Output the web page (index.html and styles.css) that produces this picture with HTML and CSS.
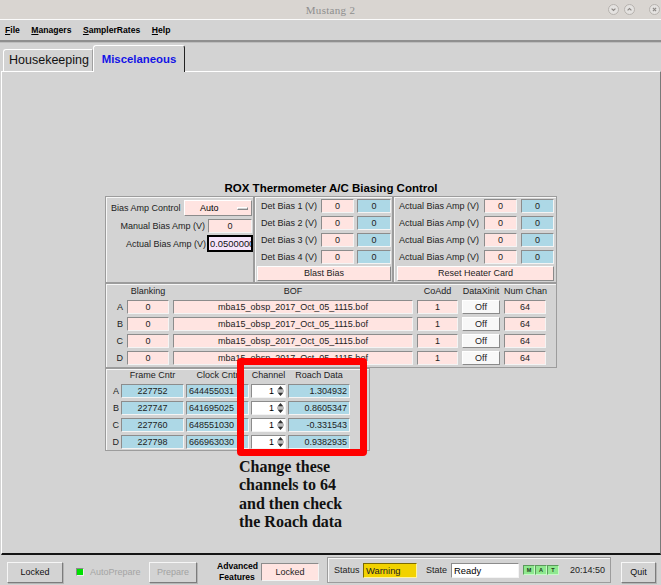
FILE: index.html
```html
<!DOCTYPE html>
<html>
<head>
<meta charset="utf-8">
<link rel="stylesheet" href="styles.css">
</head>
<body>
<div class="titlebar">
  <div></div>
  <div class="title">Mustang 2</div>
  <div class="wbtns">
    <svg class="wb" width="11" height="11" viewBox="0 0 11 11"><circle cx="5.5" cy="5.5" r="5" fill="#e4e2e0" stroke="#b6b2ae"/><path d="M3.6 4.6 L5.5 6.5 L7.4 4.6" fill="none" stroke="#8a8683" stroke-width="1.1"/></svg>
    <svg class="wb" width="11" height="11" viewBox="0 0 11 11"><circle cx="5.5" cy="5.5" r="5" fill="#e4e2e0" stroke="#b6b2ae"/><path d="M3.6 6.4 L5.5 4.5 L7.4 6.4" fill="none" stroke="#8a8683" stroke-width="1.1"/></svg>
    <svg class="wb wb-close" width="11" height="11" viewBox="0 0 11 11"><circle cx="5.5" cy="5.5" r="5" fill="#e4e2e0" stroke="#b6b2ae"/><path d="M3.9 3.9 L7.1 7.1 M7.1 3.9 L3.9 7.1" fill="none" stroke="#8a8683" stroke-width="1.1"/></svg>
  </div>
</div>
<div class="menubar">
  <span><u>F</u>ile</span>
  <span><u>M</u>anagers</span>
  <span><u>S</u>amplerRates</span>
  <span><u>H</u>elp</span>
</div>
<div class="tabs">
  <div class="tab">Housekeeping</div>
  <div class="tab sel">Miscelaneous</div>
</div>
<div class="content">
  <div class="rox">
    <div class="rox-title">ROX Thermometer A/C Biasing Control</div>
    <div class="top">
      <div class="panel p-left">
        <div class="lrow r1">
          <span class="lbl">Bias Amp Control</span>
          <span class="dropdown">Auto<span class="ind"></span></span>
        </div>
        <div class="lrow r2">
          <span class="lbl">Manual Bias Amp (V)</span>
          <span class="fld pink f-man">0</span>
        </div>
        <div class="lrow r3">
          <span class="lbl">Actual Bias Amp (V)</span>
          <span class="fld f-act">0.0500000</span>
        </div>
      </div>
      <div class="panel p-mid">
        <div class="brow"><span class="lbl">Det Bias 1 (V)</span><span class="fld pink w33">0</span><span class="fld blue w34">0</span></div>
        <div class="brow"><span class="lbl">Det Bias 2 (V)</span><span class="fld pink w33">0</span><span class="fld blue w34">0</span></div>
        <div class="brow"><span class="lbl">Det Bias 3 (V)</span><span class="fld pink w33">0</span><span class="fld blue w34">0</span></div>
        <div class="brow"><span class="lbl">Det Bias 4 (V)</span><span class="fld pink w33">0</span><span class="fld blue w34">0</span></div>
        <div class="pbtn b-blast">Blast Bias</div>
      </div>
      <div class="panel p-right">
        <div class="brow"><span class="lbl">Actual Bias Amp (V)</span><span class="fld pink w33">0</span><span class="fld blue w33">0</span></div>
        <div class="brow"><span class="lbl">Actual Bias Amp (V)</span><span class="fld pink w33">0</span><span class="fld blue w33">0</span></div>
        <div class="brow"><span class="lbl">Actual Bias Amp (V)</span><span class="fld pink w33">0</span><span class="fld blue w33">0</span></div>
        <div class="brow"><span class="lbl">Actual Bias Amp (V)</span><span class="fld pink w33">0</span><span class="fld blue w33">0</span></div>
        <div class="pbtn b-reset">Reset Heater Card</div>
      </div>
    </div>
    <div class="panel bof">
      <span></span><span class="hd">Blanking</span><span class="hd">BOF</span><span class="hd">CoAdd</span><span class="hd">DataXinit</span><span class="hd">Num Chan</span>
      <span class="let">A</span><span class="fld pink">0</span><span class="fld pink">mba15_obsp_2017_Oct_05_1115.bof</span><span class="fld pink">1</span><span class="offbtn">Off</span><span class="fld pink">64</span>
      <span class="let">B</span><span class="fld pink">0</span><span class="fld pink">mba15_obsp_2017_Oct_05_1115.bof</span><span class="fld pink">1</span><span class="offbtn">Off</span><span class="fld pink">64</span>
      <span class="let">C</span><span class="fld pink">0</span><span class="fld pink">mba15_obsp_2017_Oct_05_1115.bof</span><span class="fld pink">1</span><span class="offbtn">Off</span><span class="fld pink">64</span>
      <span class="let">D</span><span class="fld pink">0</span><span class="fld pink">mba15_obsp_2017_Oct_05_1115.bof</span><span class="fld pink">1</span><span class="offbtn">Off</span><span class="fld pink">64</span>
    </div>
    <div class="panel cnt">
      <span></span><span class="hd">Frame Cntr</span><span class="hd">Clock Cntr</span><span class="hd">Channel</span><span class="hd">Roach Data</span>
      <span class="let">A</span><span class="fld blue">227752</span><span class="fld blue clk">644455031</span><span class="spin"><span class="sv">1</span><svg class="arr" width="7" height="12" viewBox="0 0 7 12"><path d="M3.5 1 L6.5 4.5 L0.5 4.5 Z M0.5 7.5 L6.5 7.5 L3.5 11 Z" fill="#333"/><path d="M0 6 H7" stroke="#555" stroke-width="0.8"/></svg></span><span class="fld blue rd">1.304932</span>
      <span class="let">B</span><span class="fld blue">227747</span><span class="fld blue clk">641695025</span><span class="spin"><span class="sv">1</span><svg class="arr" width="7" height="12" viewBox="0 0 7 12"><path d="M3.5 1 L6.5 4.5 L0.5 4.5 Z M0.5 7.5 L6.5 7.5 L3.5 11 Z" fill="#333"/><path d="M0 6 H7" stroke="#555" stroke-width="0.8"/></svg></span><span class="fld blue rd">0.8605347</span>
      <span class="let">C</span><span class="fld blue">227760</span><span class="fld blue clk">648551030</span><span class="spin"><span class="sv">1</span><svg class="arr" width="7" height="12" viewBox="0 0 7 12"><path d="M3.5 1 L6.5 4.5 L0.5 4.5 Z M0.5 7.5 L6.5 7.5 L3.5 11 Z" fill="#333"/><path d="M0 6 H7" stroke="#555" stroke-width="0.8"/></svg></span><span class="fld blue rd">-0.331543</span>
      <span class="let">D</span><span class="fld blue">227798</span><span class="fld blue clk">666963030</span><span class="spin"><span class="sv">1</span><svg class="arr" width="7" height="12" viewBox="0 0 7 12"><path d="M3.5 1 L6.5 4.5 L0.5 4.5 Z M0.5 7.5 L6.5 7.5 L3.5 11 Z" fill="#333"/><path d="M0 6 H7" stroke="#555" stroke-width="0.8"/></svg></span><span class="fld blue rd">0.9382935</span>
    </div>
  </div>
  <div class="redbox"></div>
  <div class="note">Change these<br>channels to 64<br>and then check<br>the Roach data</div>
</div>
<div class="statusbar">
  <div class="sbtn s-locked">Locked</div>
  <span class="chk"><span></span></span>
  <span class="auto">AutoPrepare</span>
  <div class="sbtn s-prep">Prepare</div>
  <div class="adv">Advanced<br>Features</div>
  <div class="lockfld">Locked</div>
  <div class="spanel">
    <span class="sl s-status">Status</span>
    <span class="warn">Warning</span>
    <span class="sl s-state">State</span>
    <span class="ready">Ready</span>
    <span class="mat"><span>M</span><span>A</span><span>T</span></span>
    <span class="time">20:14:50</span>
  </div>
  <div class="sbtn s-quit">Quit</div>
</div>
</body>
</html>
```
FILE: styles.css
```css
html, body { margin: 0; padding: 0; }
body {
  width: 661px;
  height: 585px;
  overflow: hidden;
  background: #d3d3d3;
  font-family: "Liberation Sans", Arial, sans-serif;
  font-size: 9px;
  color: #000;
}

/* title bar */
.titlebar {
  height: 19px;
  border-bottom: 1px solid #fbfbfb;
  background: #d9d5d1;
  display: grid;
  grid-template-columns: 1fr auto 1fr;
  align-items: center;
}
.title {
  font-family: "Liberation Serif", "Times New Roman", serif;
  font-size: 11px;
  color: #8e8e8e;
  letter-spacing: 0.3px;
}
.wbtns { justify-self: end; display: flex; align-items: center; padding-right: 1px; }
.wb { display: block; margin-left: 5px; }
.wb-close { margin-left: 14px; }

/* menu bar */
.menubar {
  height: 20px;
  display: flex;
  align-items: center;
  gap: 11.5px;
  padding-left: 5px;
  font-weight: bold;
  font-size: 8.6px;
  border-bottom: 2px solid #8f8f8f;
  box-shadow: 0 1px 0 #bdbdbd;
}

/* tabs */
.tabs {
  height: 29px;
  display: flex;
  align-items: flex-end;
  padding-left: 3px;
}
.tab {
  box-sizing: border-box;
  width: 90px;
  height: 22px;
  border-top: 1px solid #fff;
  border-left: 1px solid #fff;
  border-right: 1px solid #a0a0a0;
  border-top-left-radius: 3px;
  font-size: 12.5px;
  line-height: 21px;
  padding-left: 5px;
  color: #111;
}
.tab.sel {
  width: 92px;
  height: 27px;
  border-right: 1px solid #222;
  border-top-right-radius: 3px;
  color: #1414e6;
  font-weight: bold;
  font-size: 11.4px;
  line-height: 26px;
  padding-left: 0;
  text-align: center;
  background: #d3d3d3;
  margin-bottom: -1px;
  position: relative;
  z-index: 1;
}

/* content */
.content {
  box-sizing: border-box;
  width: 660px;
  height: 484px;
  margin-left: 1px;
  border-top: 1px solid #fff;
  border-left: 1px solid #fff;
  border-right: 1px solid #7a7a7a;
  border-bottom: 2px solid #141414;
  padding-top: 109px;
  position: relative;
}
.rox { width: 452px; margin-left: 103px; }
.rox-title {
  text-align: center;
  font-weight: bold;
  font-size: 11.5px;
  line-height: 15px;
  height: 15px;
}
.panel {
  box-sizing: border-box;
  border: 1px solid #9c9c9c;
  box-shadow: inset 1px 1px 0 #f6f6f6;
}
.top { display: flex; height: 87px; }

.fld {
  box-sizing: border-box;
  display: block;
  height: 14px;
  line-height: 12px;
  border: 1px solid;
  border-color: #8c8c8c #f4f4f4 #f4f4f4 #8c8c8c;
  text-align: center;
  white-space: nowrap;
  overflow: hidden;
  color: #222;
}
.pink { background: #ffe4e1; }
.blue { background: #add8e6; }
.w33 { width: 33px; }
.w34 { width: 34px; }

.lbl { white-space: nowrap; color: #222; }

/* left subpanel */
.p-left { width: 149px; padding: 3px 0 0 5px; }
.lrow { display: flex; align-items: center; }
.r1 { height: 16px; justify-content: space-between; }
.r2 { height: 14px; margin-top: 3px; justify-content: flex-end; }
.r3 { height: 17px; margin-top: 2px; justify-content: flex-end; }
.dropdown {
  box-sizing: border-box;
  width: 68px;
  height: 16px;
  margin-right: 1px;
  background: #ffe4e1;
  border: 1px solid;
  border-color: #fff #8c8c8c #8c8c8c #fff;
  display: flex;
  align-items: center;
  padding-left: 15px;
  font-size: 9px;
}
.ind {
  box-sizing: border-box;
  width: 11px;
  height: 3px;
  margin-left: auto;
  margin-right: 3px;
  background: #d3d3d3;
  border: 1px solid;
  border-color: #fff #888 #888 #fff;
}
.f-man { width: 44px; margin-left: 3px; margin-right: 1px; }
.f-act {
  width: 46px;
  height: 17px;
  line-height: 13px;
  margin-left: 1px;
  border: 2px solid #000;
  background: #f6e4fa;
  text-align: left;
  padding-left: 1px;
  font-size: 9.4px;
  color: #111;
}

/* mid and right subpanels */
.p-mid { width: 139px; padding: 2px 1px 0 6px; }
.p-right { width: 164px; padding: 2px 2px 0 5px; }
.brow { display: flex; align-items: center; height: 14px; margin-bottom: 3px; }
.brow .lbl { flex: 1; }
.p-mid .brow .fld + .fld { margin-left: 3px; }
.p-right .brow .fld + .fld { margin-left: 4px; }
.brow:nth-child(4) { margin-bottom: 2px; }
.pbtn {
  box-sizing: border-box;
  height: 15px;
  line-height: 13px;
  text-align: center;
  background: #ffe4e1;
  border: 1px solid;
  border-color: #fdfdfd #8a8a8a #8a8a8a #fdfdfd;
  color: #222;
}
.b-blast { width: 134px; margin-left: -4px; }
.b-reset { width: 157px; margin-left: -2px; }

/* BOF */
.bof {
  height: 85px;
  display: grid;
  grid-template-columns: 17px 42px 240px 41px 38px 42px;
  grid-template-rows: 11px repeat(4, 14px);
  column-gap: 4px;
  row-gap: 3px;
  padding-top: 2px;
  align-items: center;
}
.hd { text-align: center; line-height: 11px; white-space: nowrap; color: #222; }
.let { text-align: right; color: #222; }
.offbtn {
  box-sizing: border-box;
  height: 14px;
  line-height: 12px;
  text-align: center;
  background: #f8f8f8;
  border: 1px solid;
  border-color: #fff #8a8a8a #8a8a8a #fff;
  color: #222;
}

/* counters */
.cnt {
  width: 265px;
  height: 83px;
  display: grid;
  grid-template-columns: 13px 63px 63px 35px 62px;
  grid-template-rows: 11px repeat(4, 14px);
  column-gap: 2px;
  row-gap: 3px;
  padding-top: 1px;
  padding-left: 0;
  align-items: center;
}
.cnt .let { padding-right: 0; }
.clk { text-align: left; padding-left: 2px; }
.rd { text-align: right; padding-right: 2px; }
.spin {
  box-sizing: border-box;
  height: 14px;
  background: #fff;
  border: 1px solid;
  border-color: #8c8c8c #f4f4f4 #f4f4f4 #8c8c8c;
  display: flex;
  align-items: center;
  justify-content: flex-end;
  padding-right: 1px;
}
.sv { line-height: 12px; margin-right: 3px; }
.arr { display: block; }

/* annotation */
.redbox {
  position: absolute;
  left: 235px;
  top: 286px;
  width: 130px;
  height: 98px;
  box-sizing: border-box;
  border: 7px solid #ff0000;
  border-radius: 4px;
}
.note {
  position: absolute;
  left: 237px;
  top: 386px;
  font-family: "Liberation Serif", "Times New Roman", serif;
  font-weight: bold;
  font-size: 16px;
  line-height: 18.3px;
  color: #111;
}

/* status bar */
.statusbar {
  height: 30px;
  display: flex;
  align-items: flex-start;
  padding-left: 7px;
}
.sbtn {
  box-sizing: border-box;
  height: 21px;
  margin-top: 7px;
  line-height: 19px;
  text-align: center;
  border: 1px solid;
  border-color: #f6f6f6 #7c7c7c #7c7c7c #f6f6f6;
  box-shadow: 1px 1px 0 #b4b4b4;
  color: #111;
}
.s-locked { width: 56px; margin-right: 13px; }
.chk {
  box-sizing: border-box;
  width: 8px;
  height: 8px;
  margin-top: 13px;
  margin-right: 6px;
  border: 1px solid;
  border-color: #8a8a8a #eee #eee #8a8a8a;
  display: flex;
}
.chk span { flex: 1; background: #00e000; }
.auto { width: 48px; margin-right: 11px; margin-top: 7px; line-height: 21px; color: #a4a4a4; white-space: nowrap; }
.s-prep { width: 48px; margin-right: 20px; color: #a2a2a2; }
.adv {
  width: 40px;
  margin-top: 6px;
  margin-right: 4px;
  font-weight: bold;
  font-size: 8.6px;
  line-height: 11px;
  text-align: center;
  white-space: nowrap;
}
.lockfld {
  box-sizing: border-box;
  width: 58px;
  height: 18px;
  margin-top: 8px;
  margin-right: 8px;
  line-height: 16px;
  text-align: center;
  background: #ffe4e1;
  border: 1px solid;
  border-color: #8c8c8c #f4f4f4 #f4f4f4 #8c8c8c;
  color: #222;
}
.spanel {
  box-sizing: border-box;
  width: 284px;
  height: 26px;
  margin-top: 2px;
  margin-right: 10px;
  border: 1px solid #9c9c9c;
  box-shadow: inset 1px 1px 0 #f6f6f6;
  display: flex;
  align-items: center;
  padding-left: 6px;
}
.sl { color: #222; }
.s-status { width: 23px; margin-right: 6px; }
.warn {
  box-sizing: border-box;
  width: 54px;
  height: 15px;
  line-height: 13px;
  padding-left: 2px;
  background: #f2d200;
  border: 1px solid;
  border-color: #7c6a00 #fff3a0 #fff3a0 #7c6a00;
  margin-right: 9px;
  font-size: 9.4px;
  color: #222;
}
.s-state { width: 19px; margin-right: 6px; }
.ready {
  box-sizing: border-box;
  width: 68px;
  height: 15px;
  line-height: 13px;
  padding-left: 2px;
  background: #fff;
  border: 1px solid;
  border-color: #8c8c8c #f4f4f4 #f4f4f4 #8c8c8c;
  margin-right: 4px;
  font-size: 9.4px;
}
.mat { display: flex; width: 36px; height: 10px; margin-right: 11px; gap: 0; }
.mat span {
  box-sizing: border-box;
  width: 12px;
  height: 10px;
  background: #8fe88f;
  border: 1px solid;
  border-color: #5c9a5c #c8f8c8 #c8f8c8 #5c9a5c;
  font-size: 5.5px;
  font-weight: bold;
  line-height: 8px;
  text-align: center;
  color: #1b3d1b;
}
.time { color: #222; white-space: nowrap; }
.s-quit { width: 35px; }
```
